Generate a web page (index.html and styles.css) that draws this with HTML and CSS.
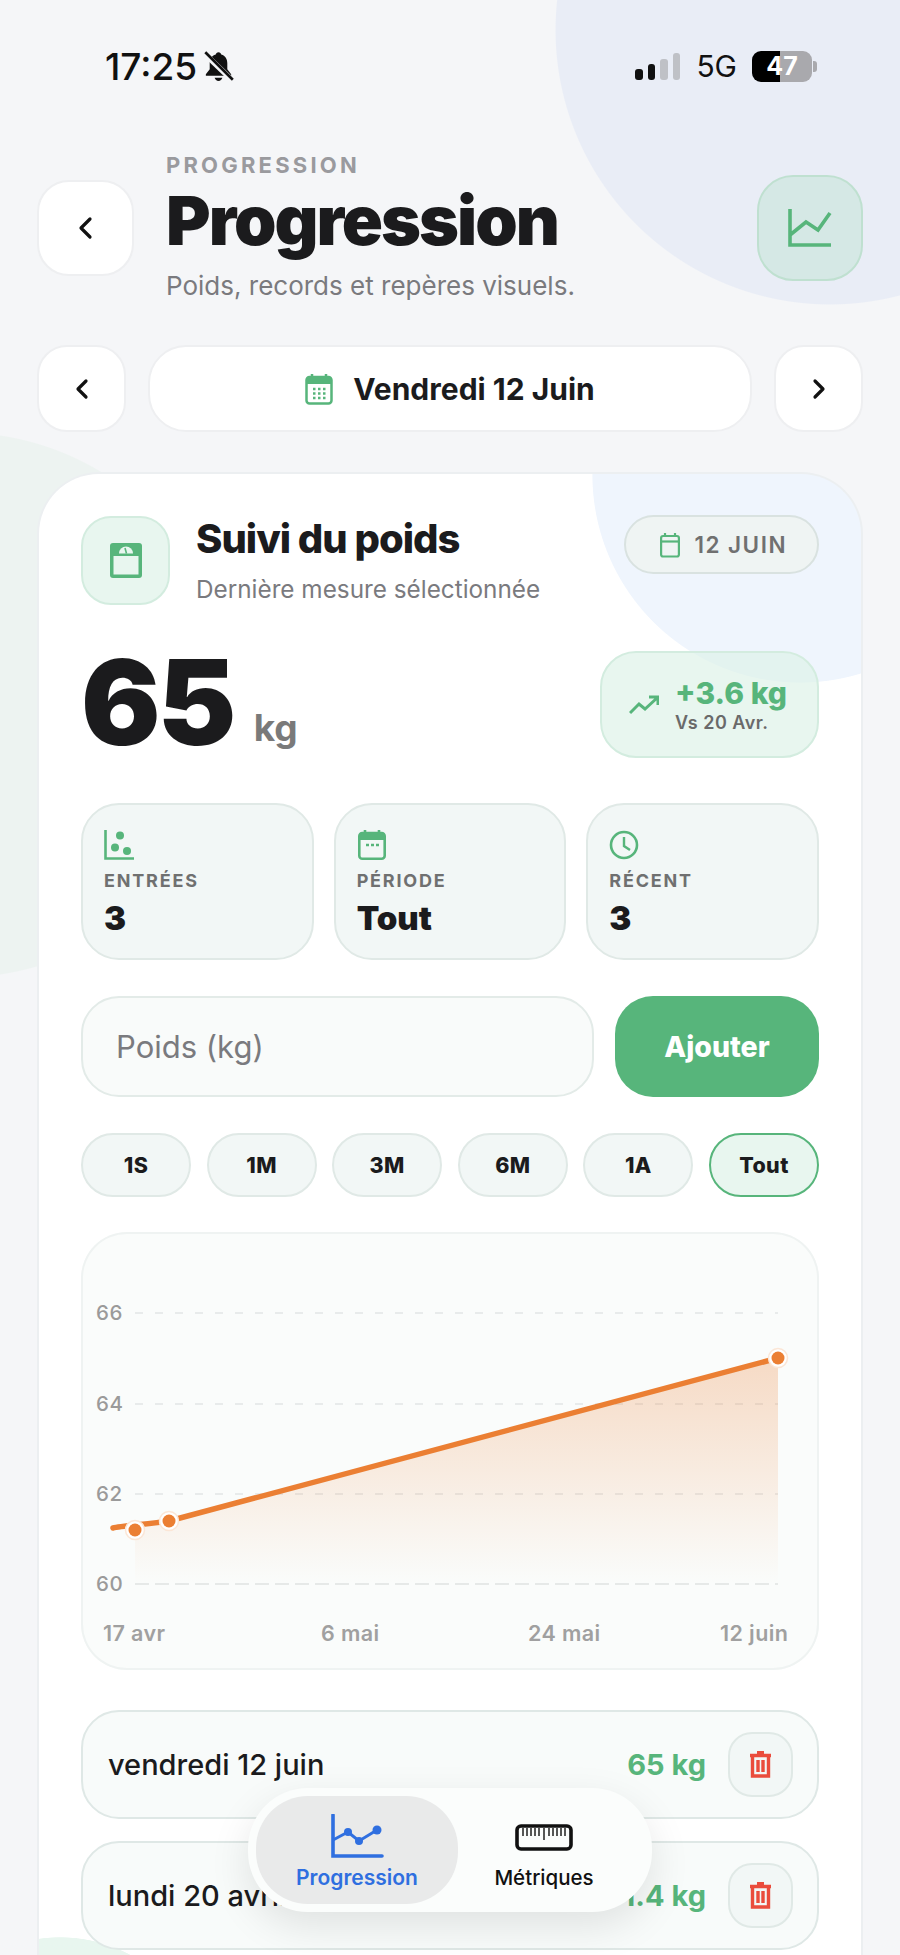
FILE: index.html
```html
<!DOCTYPE html>
<html lang="fr">
<head>
    <meta charset="UTF-8">
    <meta name="viewport" content="width=device-width, initial-scale=1.0">
    <title>Progression</title>
    <link rel="stylesheet" href="styles.css">
</head>
<body>
    <div class="app">
        <!-- Status bar -->
        <div class="status-bar">
            <div class="status-left">
                <span class="status-time">17:25</span>
                <svg class="bell" width="31" height="33" viewBox="0 0 28 30">
                    <path d="M14 2c-1.400 0-2.300.9-2.500 2.100C7.700 5.200 6 8.300 6 12v5.500L2.500 22v1.500h23V22L22 17.500V12c0-3.700-1.700-6.800-5.500-7.900C16.300 2.900 15.400 2 14 2z" fill="#111"/>
                    <path d="M10.500 25.300h7c-.4 1.800-1.800 2.900-3.500 2.900s-3.100-1.100-3.500-2.900z" fill="#111"/>
                    <path d="M1 3l26 25" stroke="#f5f6f8" stroke-width="5"/>
                    <path d="M2 2l25 25" stroke="#111" stroke-width="2.400"/>
                </svg>
            </div>
            <div class="status-right">
                <div class="signal">
                    <i class="bar-1"></i><i class="bar-2"></i><i class="bar-3"></i><i class="bar-4"></i>
                </div>
                <span class="network">5G</span>
                <div class="battery"><span>47</span></div>
                <div class="battery-nub"></div>
            </div>
        </div>

        <!-- Header -->
        <header class="header">
            <button class="icon-btn back-btn">
                <svg width="20" height="24" viewBox="0 0 20 24"><path d="M14 3L5 12l9 9" class="chevron"/></svg>
            </button>
            <div class="header-text">
                <p class="eyebrow">PROGRESSION</p>
                <h1>Progression</h1>
                <p class="subtitle">Poids, records et repères visuels.</p>
            </div>
            <div class="header-icon">
                <svg width="46" height="42" viewBox="0 0 46 42"><path d="M3 2v36h41M3 28L19 15l12 8L43 6" class="stroke-green"/></svg>
            </div>
        </header>

        <!-- Date selector -->
        <div class="date-nav">
            <button class="icon-btn date-arrow">
                <svg width="20" height="24" viewBox="0 0 20 24"><path d="M14 4l-8 8 8 8" class="chevron"/></svg>
            </button>
            <button class="date-current">
                <svg width="28" height="32" viewBox="0 0 28 32">
                    <path d="M7 1v5M21 1v5" stroke="#57b57b" stroke-width="2.500"/>
                    <rect x="1.500" y="4" width="25" height="26.500" rx="3" fill="none" stroke="#57b57b" stroke-width="2.500"/>
                    <path d="M2 5h24v6H2z" fill="#57b57b"/>
                    <path d="M8 16h2.500M13 16h2.500M18 16h2.500M8 20.500h2.500M13 20.500h2.500M18 20.500h2.500M8 25h2.500M13 25h2.500M18 25h2.500" stroke="#57b57b" stroke-width="2.400"/>
                </svg>
                <span>Vendredi 12 Juin</span>
            </button>
            <button class="icon-btn date-arrow">
                <svg width="20" height="24" viewBox="0 0 20 24"><path d="M6 4l8 8-8 8" class="chevron"/></svg>
            </button>
        </div>

        <!-- Weight card -->
        <section class="card">
            <div class="card-head">
                <div class="scale-icon">
                    <svg width="32" height="35" viewBox="0 0 32 35">
                        <rect width="32" height="35" rx="3" fill="#57b57b"/>
                        <rect x="3.500" y="13" width="25" height="18.500" fill="#e8f6ef"/>
                        <path d="M9 10.500a7 7 0 0 1 14 0z" fill="#e8f6ef"/>
                        <path d="M15 5l1.500 5.500" stroke="#57b57b" stroke-width="1.600"/>
                    </svg>
                </div>
                <div class="card-title">
                    <h2>Suivi du poids</h2>
                    <p>Dernière mesure sélectionnée</p>
                </div>
                <div class="date-badge">
                    <svg width="20" height="26" viewBox="0 0 20 26">
                        <path d="M5 1v4M15 1v4" stroke="#57b57b" stroke-width="2.200"/>
                        <rect x="1.100" y="4" width="17.800" height="20.500" rx="2" fill="none" stroke="#57b57b" stroke-width="2.200"/>
                        <path d="M1 9.500h18" stroke="#57b57b" stroke-width="2.200"/>
                    </svg>
                    <span>12 JUIN</span>
                </div>
            </div>

            <div class="metric-row">
                <div class="metric">
                    <span class="metric-value">65</span>
                    <span class="metric-unit">kg</span>
                </div>
                <div class="delta">
                    <svg width="30" height="20" viewBox="0 0 30 20"><path d="M1 18l9-9 6 5L28 3M20 2h9v8" class="stroke-delta"/></svg>
                    <div>
                        <p class="delta-value">+3.6 kg</p>
                        <p class="delta-note">Vs 20 Avr.</p>
                    </div>
                </div>
            </div>

            <div class="stats">
                <div class="stat">
                    <svg width="30" height="30" viewBox="0 0 30 30">
                        <path d="M1.500 0v28.500H30" fill="none" stroke="#57b57b" stroke-width="2.600"/>
                        <circle cx="16" cy="5.500" r="4" fill="#57b57b"/>
                        <circle cx="11" cy="17.500" r="4" fill="#57b57b"/>
                        <circle cx="23" cy="21" r="4" fill="#57b57b"/>
                    </svg>
                    <span class="stat-label">ENTRÉES</span>
                    <span class="stat-value">3</span>
                </div>
                <div class="stat">
                    <svg width="30" height="30" viewBox="0 0 30 30">
                        <path d="M8 0v5M22 0v5" stroke="#57b57b" stroke-width="2.600"/>
                        <rect x="2.300" y="3" width="25.400" height="25.700" rx="3" fill="none" stroke="#57b57b" stroke-width="2.600"/>
                        <path d="M3 4h24v6H3z" fill="#57b57b"/>
                        <path d="M9 15h3M14 15h3M19 15h3" stroke="#57b57b" stroke-width="2.400"/>
                    </svg>
                    <span class="stat-label">PÉRIODE</span>
                    <span class="stat-value">Tout</span>
                </div>
                <div class="stat">
                    <svg width="30" height="30" viewBox="0 0 30 30">
                        <circle cx="15" cy="15" r="13" fill="none" stroke="#57b57b" stroke-width="2.600"/>
                        <path d="M15 7v9l6 4" fill="none" stroke="#57b57b" stroke-width="2.400"/>
                    </svg>
                    <span class="stat-label">RÉCENT</span>
                    <span class="stat-value">3</span>
                </div>
            </div>

            <div class="add-row">
                <input class="weight-input" type="text" placeholder="Poids (kg)">
                <button class="add-btn">Ajouter</button>
            </div>

            <div class="ranges">
                <button class="range">1S</button>
                <button class="range">1M</button>
                <button class="range">3M</button>
                <button class="range">6M</button>
                <button class="range">1A</button>
                <button class="range active">Tout</button>
            </div>

            <!-- Chart -->
            <div class="chart">
                <svg width="738" height="438" viewBox="0 0 738 438">
                    <defs>
                        <linearGradient id="area" x1="0" y1="0" x2="0" y2="1">
                            <stop offset="0" stop-color="#eb7f33" stop-opacity="0.27"/>
                            <stop offset="1" stop-color="#eb7f33" stop-opacity="0"/>
                        </linearGradient>
                    </defs>
                    <path d="M54 81H697M54 172H697M54 262H697" class="grid-line"/>
                    <path d="M54 352H697" class="grid-line base"/>
                    <text x="15" y="88" class="axis-y">66</text>
                    <text x="15" y="179" class="axis-y">64</text>
                    <text x="15" y="269" class="axis-y">62</text>
                    <text x="15" y="359" class="axis-y">60</text>
                    <path d="M54 298L88 289L697 126V352H54z" fill="url(#area)"/>
                    <path d="M32 296C40 294 70 292 88 289L697 126" class="chart-line"/>
                    <circle cx="54" cy="298" r="9.500" class="dot-ring"/>
                    <circle cx="54" cy="298" r="6.500" class="dot"/>
                    <circle cx="88" cy="289" r="9.500" class="dot-ring"/>
                    <circle cx="88" cy="289" r="6.500" class="dot"/>
                    <circle cx="697" cy="126" r="9.500" class="dot-ring"/>
                    <circle cx="697" cy="126" r="6.500" class="dot"/>
                    <text x="22" y="409" class="axis-x">17 avr</text>
                    <text x="240" y="409" class="axis-x">6 mai</text>
                    <text x="447" y="409" class="axis-x">24 mai</text>
                    <text x="639" y="409" class="axis-x">12 juin</text>
                </svg>
            </div>

            <!-- Entries -->
            <div class="entries">
                <div class="entry">
                    <span class="entry-date">vendredi 12 juin</span>
                    <span class="entry-weight">65 kg</span>
                    <button class="delete-btn">
                        <svg width="23" height="27" viewBox="0 0 23 27"><path d="M8 1.500h7M1 4.500h21" class="stroke-red"/><path d="M3.500 5v20h16V5M9 9v12M14 9v12" class="stroke-red"/></svg>
                    </button>
                </div>
                <div class="entry">
                    <span class="entry-date">lundi 20 avril</span>
                    <span class="entry-weight">61.4 kg</span>
                    <button class="delete-btn">
                        <svg width="23" height="27" viewBox="0 0 23 27"><path d="M8 1.500h7M1 4.500h21" class="stroke-red"/><path d="M3.500 5v20h16V5M9 9v12M14 9v12" class="stroke-red"/></svg>
                    </button>
                </div>
            </div>
        </section>
    </div>

    <!-- Floating tab bar -->
    <nav class="tabbar">
        <a class="tab active">
            <svg width="54" height="44" viewBox="0 0 54 44">
                <path d="M3 1v41h49" fill="none" stroke="#2f6fe0" stroke-width="3.600" stroke-linecap="round"/>
                <path d="M3 26L18 18L29 27L47 16" fill="none" stroke="#2f6fe0" stroke-width="3"/>
                <circle cx="18" cy="18" r="4" fill="#2f6fe0"/>
                <circle cx="29" cy="27" r="4" fill="#2f6fe0"/>
                <circle cx="47" cy="16" r="4.500" fill="#2f6fe0"/>
            </svg>
            <span>Progression</span>
        </a>
        <a class="tab">
            <svg width="58" height="27" viewBox="0 0 58 27">
                <rect x="2" y="2" width="54" height="23" rx="4" fill="none" stroke="#111" stroke-width="3.600"/>
                <path d="M8 4v8M12 4v8M16 4v8M20 4v8M24 4v8M29 4v12M34 4v8M38 4v8M42 4v8M46 4v8M50 4v8" stroke="#111" stroke-width="1.400"/>
            </svg>
            <span>Métriques</span>
        </a>
    </nav>
</body>
</html>
```

FILE: styles.css
```css
:root {
    --green: #57b57b;
    --green-soft: #e8f6ef;
    --green-line: #d3ecdf;
    --text-color: #1b1b1d;
    --muted: #7a7a7e;
    --page-bg: #f5f6f8;
    --panel: #f2f7f6;
    --panel-line: #e0e9e6;
}

* {
    margin: 0;
    padding: 0;
    box-sizing: border-box;
    font-family: 'Inter', 'Liberation Sans', sans-serif;
}

html, body {
    height: 1955px;
    overflow: hidden;
}

/* The two pale circles behind the page */
body {
    position: relative;
    background:
        radial-gradient(circle 275px at 830px 30px, #e9edf6 99.6%, transparent 100%),
        radial-gradient(circle 273px at -40px 705px, #edf3f1 99.6%, transparent 100%),
        var(--page-bg);
    color: var(--text-color);
}

button {
    border: none;
    background: none;
}

.app {
    height: 1955px;
    padding: 46px 37px 0;
}

/* Status bar */
.status-bar {
    display: flex;
    justify-content: space-between;
    align-items: center;
    height: 40px;
    padding: 0 46px 0 68px;
}

.status-left,
.status-right {
    display: flex;
    align-items: center;
}

.status-time {
    font-size: 37px;
    font-weight: 500;
    color: #111;
}

.bell {
    margin-left: 6px;
}

.signal {
    display: flex;
    align-items: flex-end;
    gap: 5px;
    height: 28px;
}

.signal i {
    display: block;
    width: 7.500px;
    border-radius: 3px;
    background: #111;
}

.signal .bar-1 { height: 11px; }
.signal .bar-2 { height: 16px; }
.signal .bar-3 { height: 21px; background: #bfc1c6; }
.signal .bar-4 { height: 27px; background: #bfc1c6; }

.network {
    margin: 0 15px 0 16px;
    font-size: 30px;
    font-weight: 400;
    color: #111;
}

.battery {
    width: 60px;
    height: 31px;
    border-radius: 9px;
    background: linear-gradient(to right, #000 0, #000 47%, #a9a9ad 47%, #a9a9ad 100%);
    text-align: center;
}

.battery span {
    font-size: 25px;
    font-weight: 700;
    line-height: 31px;
    color: #fff;
}

.battery-nub {
    width: 4px;
    height: 11px;
    margin-left: 1px;
    border-radius: 0 3px 3px 0;
    background: #a9a9ad;
}

/* Header */
.header {
    display: flex;
    align-items: center;
    margin-top: 66px;
}

.icon-btn {
    display: flex;
    align-items: center;
    justify-content: center;
    background: #fff;
    border: 2px solid #eeeff1;
}

.back-btn {
    width: 97px;
    height: 96px;
    border-radius: 32px;
}

.chevron {
    fill: none;
    stroke: #111;
    stroke-width: 3.200;
    stroke-linecap: round;
    stroke-linejoin: round;
}

.header-text {
    flex: 1;
    margin-left: 32px;
}

.eyebrow {
    font-size: 22px;
    font-weight: 700;
    line-height: 26px;
    letter-spacing: 3.200px;
    color: #9a9a9e;
}

h1 {
    font-size: 68px;
    font-weight: 900;
    line-height: 84px;
    letter-spacing: -2px;
    color: var(--text-color);
}

.subtitle {
    margin-top: 7px;
    font-size: 26px;
    line-height: 34px;
    color: var(--muted);
}

.header-icon {
    display: flex;
    align-items: center;
    justify-content: center;
    width: 106px;
    height: 106px;
    border-radius: 36px;
    background: #d5e8e5;
    border: 2px solid #bfe0d0;
}

.stroke-green {
    fill: none;
    stroke: var(--green);
    stroke-width: 3.600;
}

/* Date selector */
.date-nav {
    display: flex;
    gap: 22px;
    margin-top: 42px;
}

.date-arrow {
    width: 89px;
    height: 87px;
    border-radius: 30px;
}

.date-current {
    flex: 1;
    display: flex;
    align-items: center;
    justify-content: center;
    gap: 20px;
    background: #fff;
    border: 2px solid #eeeff1;
    border-radius: 38px;
    font-size: 30px;
    font-weight: 700;
    color: var(--text-color);
}

/* Weight card */
.card {
    height: 1483px;
    margin-top: 40px;
    padding: 42px 42px 0;
    background:
        radial-gradient(circle 208px at 761px 1px, #eff5fd 99.6%, transparent 100%),
        radial-gradient(circle 150px at 21px 1613px, var(--green-soft) 99.6%, transparent 100%),
        #fff;
    border: 2px solid #eceff1;
    border-bottom: none;
    border-radius: 62px 62px 0 0;
}

.card-head {
    display: flex;
    align-items: flex-start;
    height: 89px;
}

.scale-icon {
    display: flex;
    align-items: center;
    justify-content: center;
    width: 89px;
    height: 89px;
    border-radius: 30px;
    background: var(--green-soft);
    border: 2px solid var(--green-line);
}

.card-title {
    flex: 1;
    margin-left: 26px;
}

h2 {
    font-size: 40px;
    font-weight: 800;
    line-height: 46px;
    letter-spacing: -1px;
}

.card-title p {
    margin-top: 13px;
    font-size: 24.300px;
    line-height: 28px;
    color: var(--muted);
}

.date-badge {
    display: flex;
    align-items: center;
    gap: 14px;
    height: 59px;
    margin-top: -1px;
    padding: 0 30px 0 34px;
    border-radius: 30px;
    background: #eff4f3;
    border: 2px solid #d9e2e0;
    font-size: 22.500px;
    font-weight: 600;
    letter-spacing: 1.500px;
    color: #707070;
}

.metric-row {
    display: flex;
    justify-content: space-between;
    align-items: flex-start;
    margin-top: 46px;
}

.metric {
    height: 107px;
    line-height: 103px;
    white-space: nowrap;
}

.metric-value {
    font-size: 118px;
    font-weight: 900;
    letter-spacing: -3px;
}

.metric-unit {
    margin-left: 16px;
    vertical-align: 4px;
    font-size: 37px;
    font-weight: 700;
    color: #7a7a7a;
}

.delta {
    display: flex;
    align-items: center;
    gap: 16px;
    height: 107px;
    width: 219px;
    padding-left: 27px;
    border-radius: 36px;
    background: rgba(222, 242, 232, 0.7);
    border: 2px solid var(--green-line);
}

.stroke-delta {
    fill: none;
    stroke: var(--green);
    stroke-width: 3;
}

.delta-value {
    font-size: 30px;
    font-weight: 800;
    line-height: 36px;
    color: var(--green);
}

.delta-note {
    font-size: 18px;
    font-weight: 600;
    line-height: 24px;
    letter-spacing: 0.500px;
    color: #6a6a6a;
}

.stats {
    display: grid;
    grid-template-columns: repeat(3, 1fr);
    gap: 20px;
    margin-top: 45px;
}

.stat {
    display: flex;
    flex-direction: column;
    align-items: flex-start;
    height: 157px;
    padding: 25px 0 0 21px;
    border-radius: 38px;
    background: var(--panel);
    border: 2px solid var(--panel-line);
}

.stat-label {
    margin-top: 9px;
    font-size: 18px;
    font-weight: 700;
    line-height: 24px;
    letter-spacing: 1.800px;
    color: #6f7070;
}

.stat-value {
    margin-top: 5px;
    font-size: 33px;
    font-weight: 900;
    line-height: 40px;
}

.add-row {
    display: flex;
    gap: 21px;
    margin-top: 36px;
}

.weight-input {
    flex: 1;
    min-width: 0;
    height: 101px;
    padding-left: 33px;
    border-radius: 38px;
    background: #f9fbfa;
    border: 2px solid #e3ebe8;
    font-size: 31px;
    outline: none;
}

.weight-input::placeholder {
    color: var(--muted);
    opacity: 1;
}

.add-btn {
    width: 204px;
    border-radius: 38px;
    background: var(--green);
    font-size: 28.500px;
    font-weight: 800;
    color: #fff;
}

.ranges {
    display: flex;
    gap: 15.600px;
    margin-top: 36px;
}

.range {
    flex: 1;
    height: 64px;
    border-radius: 32px;
    background: var(--panel);
    border: 2px solid var(--panel-line);
    font-size: 21.500px;
    font-weight: 800;
    letter-spacing: 0.400px;
    color: var(--text-color);
}

.range.active {
    background: var(--green-soft);
    border-color: var(--green);
}

/* Chart */
.chart {
    height: 438px;
    margin-top: 35px;
    border-radius: 46px;
    background: #fafcfb;
    box-shadow: inset 0 0 0 2px #eff3f2;
}

.chart svg {
    display: block;
}

.grid-line {
    fill: none;
    stroke: #e8ebeb;
    stroke-width: 2;
    stroke-dasharray: 8 12;
}

.grid-line.base {
    stroke: #dfe2e2;
    stroke-width: 1.500;
    stroke-dasharray: 14 6;
}

.axis-y {
    font-size: 20.500px;
    font-weight: 500;
    letter-spacing: 0.500px;
    fill: #9a9a9a;
}

.axis-x {
    font-size: 21.500px;
    font-weight: 600;
    letter-spacing: 0.400px;
    fill: #a0a0a0;
}

.chart-line {
    fill: none;
    stroke: #eb7f33;
    stroke-width: 5.500;
    stroke-linecap: round;
}

.dot-ring {
    fill: #fff;
    stroke: #fbe6d6;
    stroke-width: 1.500;
}

.dot {
    fill: #eb7f33;
}

/* Entries */
.entries {
    display: flex;
    flex-direction: column;
    gap: 22px;
    margin-top: 40px;
}

.entry {
    display: flex;
    align-items: center;
    height: 109px;
    padding: 0 24px 0 25px;
    border-radius: 38px;
    background: #f8fbfa;
    border: 2px solid #dfe8e6;
}

.entry-date {
    flex: 1;
    font-size: 29px;
    font-weight: 500;
}

.entry-weight {
    margin-right: 22px;
    font-size: 29px;
    font-weight: 700;
    color: var(--green);
}

.delete-btn {
    display: flex;
    align-items: center;
    justify-content: center;
    width: 65px;
    height: 65px;
    border-radius: 24px;
    background: var(--panel);
    border: 2px solid var(--panel-line);
}

.stroke-red {
    fill: none;
    stroke: #ea4c3c;
    stroke-width: 3.400;
}

/* Tab bar */
.tabbar {
    position: absolute;
    left: 248px;
    top: 1788px;
    display: flex;
    align-items: center;
    width: 404px;
    height: 124px;
    padding: 8px;
    border-radius: 60px;
    background: #fbfdfc;
    box-shadow: 0 14px 40px rgba(0, 0, 0, 0.1);
}

.tab {
    display: flex;
    flex-direction: column;
    align-items: center;
    height: 108px;
    font-weight: 500;
    color: #111;
}

.tab span {
    line-height: 24px;
}

.tab.active {
    width: 202px;
    padding-top: 18px;
    border-radius: 52px;
    background: #e9eaea;
    font-size: 21px;
    font-weight: 600;
    color: #2f6fe0;
}

.tab.active span {
    margin-top: 8px;
}

.tab:not(.active) {
    flex: 1;
    padding: 28px 14px 0 0;
    font-size: 20.500px;
}

.tab:not(.active) span {
    margin-top: 15px;
}
```
